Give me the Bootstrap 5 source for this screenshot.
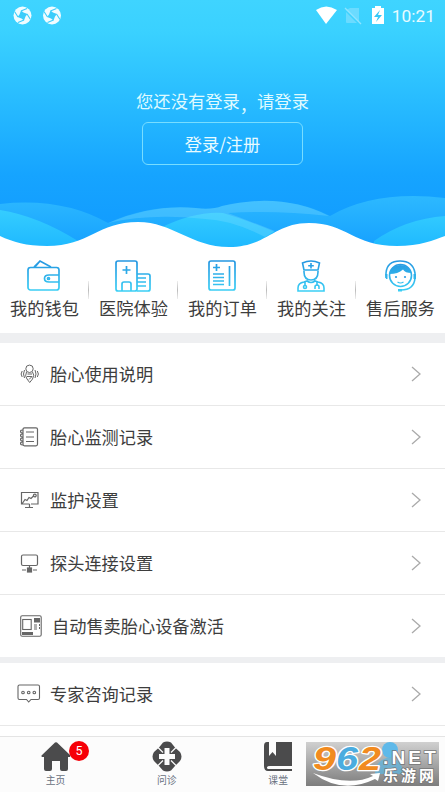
<!DOCTYPE html>
<html lang="zh-CN">
<head>
<meta charset="utf-8">
<meta name="viewport" content="width=device-width, initial-scale=1">
<title>我的</title>
<link href="https://cdn.jsdelivr.net/npm/bootstrap@5.3.0/dist/css/bootstrap.min.css" rel="stylesheet">
<style>
body{font-family:"Noto Sans CJK SC",sans-serif;background:#fff;color:#3d3d3d;height:792px;overflow:hidden}
svg{display:block;flex:none}
.hero{height:250px;background:linear-gradient(#3fd4ff 0,#3ad1ff 32px,#28bcff 100px,#16a4ff 175px,#129dff 225px)}
.waves{left:0;bottom:0}
.status{height:32px;padding:0 10px 0 13px;position:relative}
.clock{font:400 17.4px/32px Roboto,sans-serif;color:#e9fbff}
.hello{font-size:17.3px;line-height:24px;margin-top:57px;color:#dffaff}
.comma{font-family:"Noto Sans CJK TC",sans-serif;position:relative;top:4px}
.login{width:161px;height:43px;margin-top:9px;font-size:17.2px;border:1px solid #78ddff;border-radius:6px;color:#e8fbff;line-height:24px;padding:0}
.quick{height:83px}
.quick-item{width:89px;padding-top:8px}
.quick-item+.quick-item::before{content:"";position:absolute;left:-1px;top:31px;width:1px;height:18px;background:linear-gradient(#eee,#bbb,#eee)}
.quick-item span{font-size:17.2px;line-height:24px;margin-top:4px;white-space:nowrap}
.quick-item svg{margin-left:-1px}
.gap-bar{background:#eeeff1}
.menu-row{height:63px;border:0;border-bottom:1px solid #e8e8e8;padding:0 23px 0 20px;color:#3d3d3d;background:#fff}
.menu-row span{font-size:17.2px;line-height:24px}
.ico{width:30px}
.tabs{height:56px;background:#fcfcfc;border-top:1px solid #e4e4e4}
.tab{width:111.25px;padding-top:4px;font-size:9.8px;line-height:14px;color:#687080}
.count{left:69px;top:4px;width:20px;height:20px;background:#f60008;font:12.5px/20px Roboto,sans-serif;padding:0}
.stamp{right:6px;bottom:6px}
</style>
<script src="https://cdn.jsdelivr.net/npm/bootstrap@5.3.0/dist/js/bootstrap.bundle.min.js"></script>
</head>
<body>
<svg width="0" height="0" class="position-absolute"><defs>
<linearGradient id="blue" gradientUnits="userSpaceOnUse" x1="0" y1="0" x2="0" y2="34"><stop stop-color="#2291df"/><stop offset="1" stop-color="#3bd0f5"/></linearGradient>
<g id="swirl"><circle cx="9.500" cy="9.500" r="9" fill="#f0fcff"/><path fill="#3bcdfb" d="M8 4.500L10.500 6.500L14.500 8L12.500 10.500L11 14.500L8.500 12.500L4.500 11L6.500 8.500Z"/><path d="M8 5L14 2.500M14 8L17.500 13.500M11 14L5 16.500M5 11L1.500 5.500" stroke="#3bcdfb" stroke-width="1.100"/></g>
</defs></svg>

<header class="hero position-relative d-flex flex-column align-items-center">
<svg class="waves position-absolute" width="445" height="75" viewBox="0 175 445 75">
<defs><linearGradient id="wa" x1="0" y1="0" x2="0" y2="1"><stop stop-color="#2db9ff"/><stop offset="1" stop-color="#149fff"/></linearGradient><linearGradient id="wb" x1="0" y1="0" x2="0" y2="1"><stop stop-color="#35cdff"/><stop offset="1" stop-color="#1db7ff"/></linearGradient></defs>
<path fill="url(#wa)" d="M0 204Q62 197 108 223Q150 204 196 208Q212 210 222 206Q282 192 330 216Q375 190 445 198V250H0Z"/>
<path fill="url(#wb)" d="M0 210Q38 216 78 241L70 250H0ZM160 228Q195 211 223 213Q250 221 275 232L245 250H190ZM374 241Q405 219 445 216V250H374Z"/>
<path fill="#8fe3ff" fill-opacity=".25" d="M108 223Q152 204 196 208Q212 210 222 206Q282 192 329 216Q275 210 228 213Q252 222 275 231L265 237Q232 220 205 219Q150 213 108 223Z"/>
<path fill="#fff" d="M0 236C13 242 26 246 47 246C89 246 98 222 138 222C173 222 191 247 229 247C267 247 274 223 309 223C346 223 354 246 397 246C420 246 434 240 445 236V251H0Z"/>
</svg>
<div class="status w-100 d-flex align-items-center">
<svg width="20" height="20" viewBox="0 0 20 20"><use href="#swirl"/></svg>
<svg class="ms-2 me-auto" width="22" height="20" viewBox="-1.5 0 22 20"><use href="#swirl"/></svg>
<svg width="77" height="22" viewBox="314 5 77 22"><path fill="#fff" d="M315 10Q325 3 336 10L325 24Z"/><path fill="#6bdbff" d="M349 8H358V22L345 10ZM345 12L356 23H346Q345 23 345 22Z"/><path stroke="#8fe4ff" stroke-width="1.300" d="M344 8L360 24"/><path fill="#fff" d="M374 6H380V8H383V24H371V8H374Z"/><path fill="#35c8f7" d="M379 10L373 17H377L375 22L381 15H377Z"/></svg>
<span class="clock">10:21</span>
</div>
<div class="hello position-relative">您还没有登录<span class="comma">，</span>请登录</div>
<a class="login btn position-relative d-flex align-items-center justify-content-center" href="#">登录/注册</a>
</header>

<nav class="quick d-flex">
<a class="quick-item position-relative d-flex flex-column align-items-center text-reset text-decoration-none"><svg width="36" height="34" viewBox="0 0 36 34" fill="none" stroke="url(#blue)" stroke-width="1.700"><path d="M9 9L14 3L25 9M14 3L8 9"/><rect x="2" y="9.500" width="31" height="22.500" rx="2.500"/><path d="M33 17H23Q18.500 17 18.500 20.500T23 24H33"/><circle cx="22.500" cy="20.500" r="1"/></svg><span>我的钱包</span></a>
<a class="quick-item position-relative d-flex flex-column align-items-center text-reset text-decoration-none"><svg width="36" height="34" viewBox="0 0 36 34" fill="none" stroke="url(#blue)" stroke-width="1.700"><rect x="1" y="3" width="21" height="30" rx="2"/><path d="M22 16H33Q35 16 35 18V31Q35 33 33 33H22M7 33V26Q7 24 9 24H14Q16 24 16 26V33M11.500 8V16M7.500 12H15.500M22 20H31M22 24H31M22 28H31"/></svg><span>医院体验</span></a>
<a class="quick-item position-relative d-flex flex-column align-items-center text-reset text-decoration-none"><svg width="36" height="34" viewBox="0 0 36 34" fill="none" stroke="url(#blue)" stroke-width="1.700"><rect x="5" y="3" width="26" height="29" rx="2"/><path d="M12.500 6V13M9 9.500H16M9 16H20M9 19.500H20M9 23H20M9 26.500H20M25.500 8V28"/></svg><span>我的订单</span></a>
<a class="quick-item position-relative d-flex flex-column align-items-center text-reset text-decoration-none"><svg width="36" height="34" viewBox="0 0 36 34" fill="none" stroke="url(#blue)" stroke-width="1.600"><path d="M11 12L9.500 5Q18 1 26.500 5L25 12ZM18 5V10.500M15.200 7.800H20.800M11 13V14Q11 22 18 22T25 14V13M5 33V30Q5 25 11 24L14 23Q18 26 22 23L25 24Q31 25 31 30V33ZM12 24V28M24 24V28"/><circle cx="12" cy="29" r="1.500"/><path d="M22 31V29Q22 27 24 27T26 29V31"/></svg><span>我的关注</span></a>
<a class="quick-item position-relative d-flex flex-column align-items-center text-reset text-decoration-none"><svg width="36" height="34" viewBox="0 0 36 34" fill="none" stroke="url(#blue)" stroke-width="1.600"><path d="M4 20V15Q5 3 18 3T33 15V20M33 20Q32 32 19 32"/><circle cx="18.500" cy="17.500" r="11"/><path fill="url(#blue)" stroke="none" d="M7.500 16Q8 8 18 7Q27 7 29.500 15Q23 15 21 11.500Q16 16 7.500 16M3 16H5.500V21H4ZM31.500 16H34V21H31.500ZM16 31H20V33.500H16Z"/><path d="M15.500 24Q18.500 26 21.500 24" stroke-width="1.200"/><g fill="#2d9fe4" stroke="none"><circle cx="14" cy="19" r="1.100"/><circle cx="23" cy="19" r="1.100"/></g></svg><span>售后服务</span></a>
</nav>
<div class="gap-bar" style="height:10px"></div>

<main class="list-group list-group-flush rounded-0">
<a class="menu-row d-flex align-items-center text-decoration-none"><div class="ico"><svg width="20" height="20" viewBox="0 0 20 20" fill="none" stroke="#666" stroke-width="1"><circle cx="9.500" cy="4.800" r="3.700"/><path d="M6.500 8Q4.500 12 7 15L9.700 18.500L12.500 15Q15 11 12.500 8M7.500 10H12M7 12.500H12L9 15.500M4.500 6Q2.500 10 4.500 14M2.200 7Q0 10 2.200 13M15 6Q17 10 15 14M17.300 7Q19.500 10 17.300 13"/></svg></div><span>胎心使用说明</span><svg class="ms-auto" width="14" height="18" viewBox="0 0 14 18"><path d="M4 2L12 9L4 16" fill="none" stroke="#aaa" stroke-width="1.300"/></svg></a>
<a class="menu-row d-flex align-items-center text-decoration-none"><div class="ico"><svg width="20" height="20" viewBox="0 0 20 20" fill="none" stroke="#666" stroke-width="1.200"><rect x="3" y=".8" width="14.500" height="18" rx="1.500"/><path d="M6 5H14M6 10H14M6 14.500H14M3 3Q.5 3 .5 4.500T3 6M3 7Q.5 7 .5 8.500T3 10M3 11Q.5 11 .5 12.500T3 14M3 15Q.5 15 .5 16.500T3 18"/></svg></div><span>胎心监测记录</span><svg class="ms-auto" width="14" height="18" viewBox="0 0 14 18"><path d="M4 2L12 9L4 16" fill="none" stroke="#aaa" stroke-width="1.300"/></svg></a>
<a class="menu-row d-flex align-items-center text-decoration-none"><div class="ico"><svg width="20" height="18" viewBox="0 0 20 18" fill="none" stroke="#666" stroke-width="1.200"><path d="M9.500 13H1.500V1.500H18V13H11M9.500 13V16M5 16.500H13M2 13L5 8.500L7 9.500L9 6.500L11 7.500L14 4.500"/><circle cx="14.800" cy="4.500" r="1.400"/></svg></div><span>监护设置</span><svg class="ms-auto" width="14" height="18" viewBox="0 0 14 18"><path d="M4 2L12 9L4 16" fill="none" stroke="#aaa" stroke-width="1.300"/></svg></a>
<a class="menu-row d-flex align-items-center text-decoration-none"><div class="ico"><svg width="20" height="19" viewBox="0 0 20 19" fill="none" stroke="#666" stroke-width="1.200"><rect x="1.500" y="1" width="16" height="10.500" rx="1.500"/><path d="M9.500 12V14M2 16H6M13 16H17"/><rect x="7.500" y="14" width="4" height="4" fill="#666"/></svg></div><span>探头连接设置</span><svg class="ms-auto" width="14" height="18" viewBox="0 0 14 18"><path d="M4 2L12 9L4 16" fill="none" stroke="#aaa" stroke-width="1.300"/></svg></a>
<a class="menu-row d-flex align-items-center text-decoration-none border-0" style="height:62px"><div class="ico"><svg width="22" height="22" viewBox="0 0 22 22" fill="none" stroke="#666" stroke-width="1.100"><rect x=".7" y=".7" width="20.500" height="20.500" rx="1.500"/><rect x="2.700" y="4.500" width="8.500" height="10"/><path fill="#666" stroke="none" d="M14 3H20V7.500H14ZM2 17H13V20H2ZM14 9.500H17V10.500H14ZM14 11.500H17V12.500H14ZM14 13.500H17V14.500H14ZM19 9H20V11H19ZM19 12H20V14H19Z"/></svg></div><span class="ps-1" style="margin-left:-2px">自动售卖胎心设备激活</span><svg class="ms-auto" width="14" height="18" viewBox="0 0 14 18"><path d="M4 2L12 9L4 16" fill="none" stroke="#aaa" stroke-width="1.300"/></svg></a>
<div class="gap-bar" style="height:6px"></div>
<a class="menu-row d-flex align-items-center text-decoration-none"><div class="ico"><svg width="24" height="20" viewBox="0 0 24 20" style="margin-left:-3px" fill="none" stroke="#666" stroke-width="1.100"><path d="M2.500 1H21Q22.500 1 22.500 2.500V14Q22.500 15.500 21 15.500H14L11.700 18L9.500 15.500H2.500Q1 15.500 1 14V2.500Q1 1 2.500 1Z"/><circle cx="6" cy="8.500" r="1.300"/><circle cx="11.700" cy="8.500" r="1.300"/><circle cx="17.300" cy="8.500" r="1.300"/></svg></div><span>专家咨询记录</span><svg class="ms-auto" width="14" height="18" viewBox="0 0 14 18"><path d="M4 2L12 9L4 16" fill="none" stroke="#aaa" stroke-width="1.300"/></svg></a>
</main>

<footer class="tabs fixed-bottom d-flex">
<a class="tab position-relative d-flex flex-column align-items-center text-decoration-none"><svg width="32" height="32" viewBox="0 0 32 32" fill="#4b4b4c"><path d="M15 1.500Q16 .8 17 1.500L30 14Q31 16 29 16H28V28Q28 30 26 30H22Q20 30 20 28V20H12V28Q12 30 10 30H6Q4 30 4 28V16H2Q.5 15 2 14Z"/></svg>主页<span class="count badge rounded-circle position-absolute">5</span></a>
<a class="tab d-flex flex-column align-items-center text-decoration-none"><svg width="32" height="32" viewBox="0 0 32 32"><path fill="#4b4b4c" d="M12 1.500Q16 -.5 20 1.500L24 6.500L29 11Q32 15.500 29 20L24 25L20 29.500Q16 31.500 12 29.500L8 25L3 20Q0 15.500 3 11L8 6.500Z"/><path d="M7 6.500L12 11.500M25 6.500L20 11.500M7 24.500L12 19.500M25 24.500L20 19.500" stroke="#fcfcfc" stroke-width="1.200"/><path fill="#fcfcfc" d="M13.500 7H18.500V13H24V18H18.500V24H13.500V18H8V13H13.500Z"/></svg>问诊</a>
<a class="tab d-flex flex-column align-items-center text-decoration-none"><svg width="32" height="32" viewBox="0 0 32 32"><path fill="#4b4b4c" d="M5 1H30V25H8Q5 25 5 27H30V30H6Q2 30 2 25V5Q2 1 5 1Z"/><path fill="#fcfcfc" d="M7 1H14V15L10.500 11L7 15ZM6 25.500H30V28H6Q4 27 6 25.500Z"/></svg>课堂</a>
<a class="tab d-flex flex-column align-items-center text-decoration-none" style="color:#278fc7"><svg width="32" height="32" viewBox="0 0 32 32" fill="#5fb9e9"><circle cx="16" cy="9" r="8"/><path d="M2 30Q2 19 16 17Q30 19 30 30Z"/></svg>我的</a>
<svg class="stamp position-absolute" width="134" height="50" viewBox="305 736 134 50">
<defs><linearGradient id="gray" x1="0" y1="0" x2="0" y2="1"><stop stop-color="#d0d0d0"/><stop offset="1" stop-color="#7d7d7d"/></linearGradient></defs>
<rect x="306" y="742" width="133" height="44" fill="url(#gray)"/>
<circle cx="390" cy="750" r="8" fill="#5fb9e9"/><path d="M375 774Q375 760 390 757Q403 760 403 774Z" fill="#5fb4de" opacity=".75"/>
<g font-family="Liberation Sans,sans-serif" font-weight="700" font-style="italic" font-size="33" stroke="#fff" stroke-width="2.500" paint-order="stroke" stroke-linejoin="round"><text x="313" y="769.500" fill="#f18b20" textLength="23" lengthAdjust="spacingAndGlyphs">9</text><text x="336" y="769.500" fill="#4bacdf" textLength="22" lengthAdjust="spacingAndGlyphs">6</text><text x="359" y="769.500" fill="#f18b20" textLength="22" lengthAdjust="spacingAndGlyphs">2</text></g>
<path d="M313 773Q350 787 373 776L370 774L380 773L378 781L375 779Q342 795 313 773Z" fill="#fff"/>
<g fill="#fff" stroke="#777" stroke-width="1.500" paint-order="stroke" font-weight="700"><text x="383" y="764" font-family="Liberation Sans,sans-serif" font-size="18" letter-spacing="3" textLength="56" lengthAdjust="spacingAndGlyphs">.NET</text><text x="383" y="781" font-family="Noto Sans CJK SC,sans-serif" font-size="15" textLength="51">乐游网</text></g>
</svg>
</footer>
</body>
</html>
